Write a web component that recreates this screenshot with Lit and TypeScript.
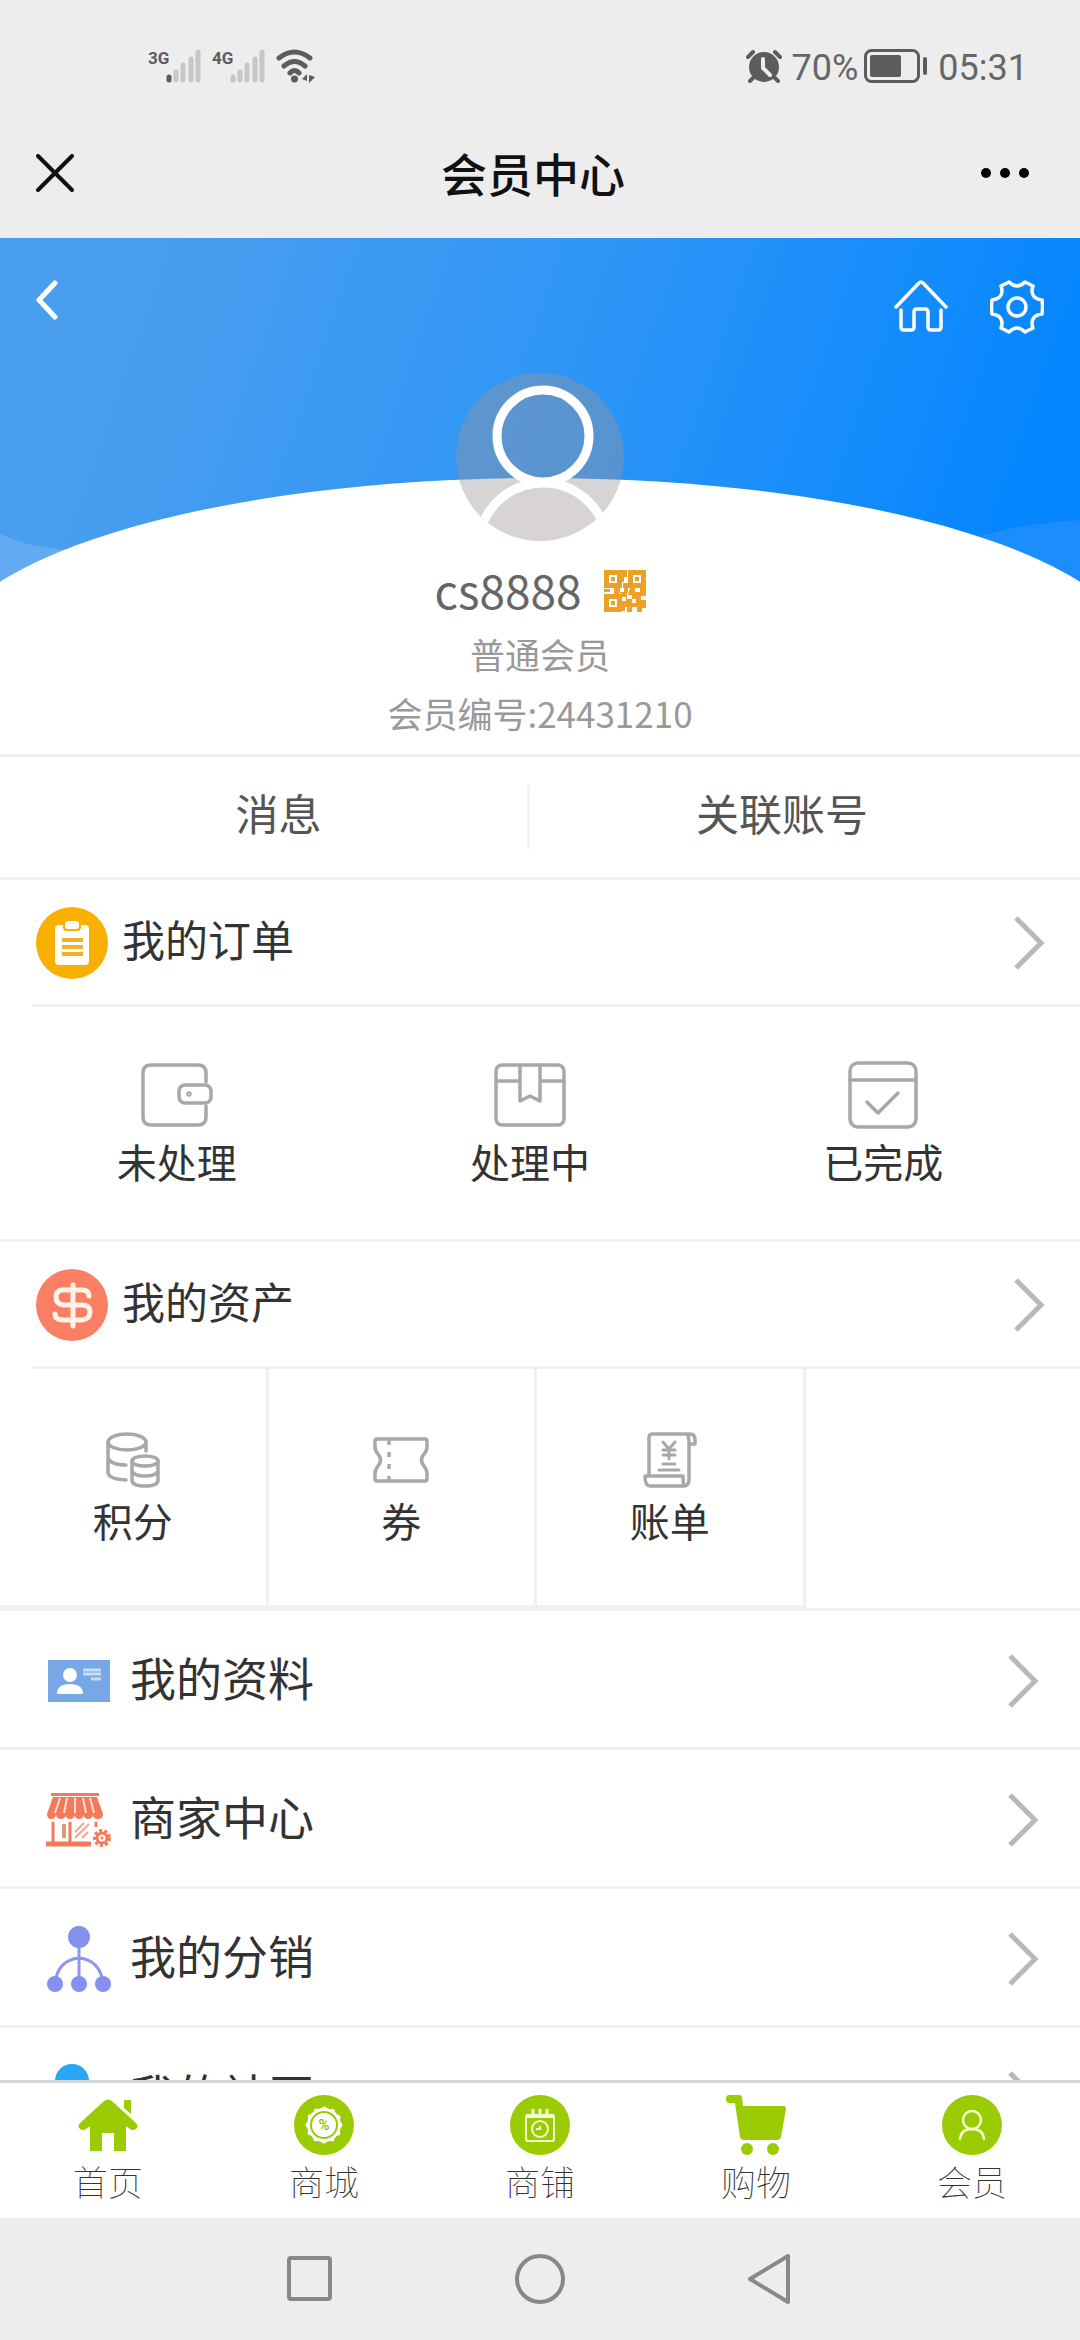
import { LitElement, html, css, svg, nothing } from "lit";
import type { TemplateResult } from "lit";
import { customElement, property } from "lit/decorators.js";

const art = (w: number, h: number, body: TemplateResult) =>
  html`<svg width=${w} height=${h} viewBox="0 0 ${w} ${h}" fill="none" aria-hidden="true">${body}</svg>`;

/* ---------- status bar ---------- */

const signal = (label: string, first: string) =>
  art(54, 36, svg`
    <text x="0" y="16" font-family="Roboto, sans-serif" font-size="17" font-weight="700" fill="#5c5c5c">${label}</text>
    <g stroke-width="5" stroke-linecap="round" stroke="#c6c6c6">
      <path d="M21 29v3" stroke=${first}/>
      <path d="M28 24v8M35 17v15M43 11v21M50 4v28"/>
    </g>`);

const wifi = art(40, 36, svg`
  <g stroke="#5c5c5c" stroke-width="5" stroke-linecap="round">
    <path d="M3 10Q18.500 -2 34 10M8 18Q18.500 9 29 18M14 25Q18.500 20 23 25"/>
  </g>
  <circle cx="18.500" cy="31" r="3.500" fill="#5c5c5c"/>
  <path d="M26 31l5-5v7zM33 27v8l6-6z" fill="#5c5c5c"/>`);

const alarm = art(36, 34, svg`
  <circle cx="18" cy="18" r="15" fill="#5c5c5c"/>
  <g stroke="#5c5c5c" stroke-width="4" stroke-linecap="round">
    <path d="M2 8l5-5M34 8l-5-5M7 29l-3 3M29 29l3 3"/>
  </g>
  <path d="M17 10v9l7 7" stroke="#ededed" stroke-width="4" stroke-linecap="round" stroke-linejoin="round"/>`);

const battery = art(64, 34, svg`
  <rect x="1.500" y="1.500" width="53" height="31" rx="6" stroke="#5c5c5c" stroke-width="3"/>
  <rect x="6" y="6" width="31" height="22" rx="2" fill="#5c5c5c"/>
  <path d="M61 10v14" stroke="#5c5c5c" stroke-width="4" stroke-linecap="round"/>`);

/* ---------- title bar ---------- */

const closeIcon = art(38, 38, svg`<path d="M2 2l34 34M36 2L2 36" stroke="#111" stroke-width="4" stroke-linecap="round"/>`);

const dotsIcon = art(50, 12, svg`
  <g fill="#000"><circle cx="6" cy="6" r="5"/><circle cx="25" cy="6" r="5"/><circle cx="44" cy="6" r="5"/></g>`);

/* ---------- profile ---------- */

const backIcon = art(24, 40, svg`<path d="M19 3L3 20l16 17" stroke="#fff" stroke-width="5" stroke-linecap="round" stroke-linejoin="round"/>`);

const homeOutline = art(54, 54, svg`
  <g stroke="#fff" stroke-width="3.500" stroke-linecap="round" stroke-linejoin="round">
    <path d="M2 27L25 3q2-2 4 0L52 27"/>
    <path d="M7 30v17q0 3 3 3h7q3 0 3-3V32q0-3 3-3h8q3 0 3 3v15q0 3 3 3h7q3 0 3-3V30"/>
  </g>`);

const gearIcon = art(54, 54, svg`
  <g stroke="#fff" stroke-width="3.500" stroke-linejoin="round">
    <path d="M19 2q4 4 8 4t8-4l8 4q-2 5 0 9t9 5q1 7 0 14-7 1-9 5t0 9l-8 4q-4-4-8-4t-8 4l-8-4q2-5 0-9t-9-5q-1-7 0-14 7-1 9-5t0-9z"/>
    <circle cx="27" cy="27" r="9"/>
  </g>`);

const avatarArt = art(168, 168, svg`
  <clipPath id="disc"><circle cx="84" cy="84" r="84"/></clipPath>
  <g clip-path="url(#disc)">
    <rect width="168" height="168" fill="#9e9397" fill-opacity=".4"/>
    <circle cx="87" cy="175" r="65" stroke="#fff" stroke-width="9"/>
    <circle cx="87" cy="63" r="46" stroke="#fff" stroke-width="9"/>
  </g>`);

const qrIcon = art(42, 42, svg`
  <g stroke="#eaa12a" stroke-width="5">
    <rect x="2.500" y="2.500" width="13" height="13"/><rect x="26.500" y="2.500" width="13" height="13"/><rect x="2.500" y="26.500" width="13" height="13"/>
  </g>
  <g fill="#f0a028">
    <rect x="7" y="7" width="4" height="4"/><rect x="31" y="7" width="4" height="4"/><rect x="7" y="31" width="4" height="4"/>
    <path d="M18 0h5v7h-3v5h-2zM19 13h5v5h-5zM0 19h6v3H0zM10 18h6v4h4v-4h4v5h-9v2h-5zM26 18h5v4h5v-4h6v8h-5v4h5v8h-4v4h-5v-5h-5v5h-5v-5h-2v4h-4V31h5v-4h-5v-4h6v6h5v4h4v-4h-4v-4h-4z"/>
  </g>`);

/* ---------- section badges ---------- */

const ordersBadge = art(72, 72, svg`
  <circle cx="36" cy="36" r="36" fill="#f9b000"/>
  <rect x="19" y="18" width="34" height="40" rx="4" fill="#fff"/>
  <path d="M27 14h18v6q0 4-4 4H31q-4 0-4-4z" fill="#f9b000"/>
  <rect x="29" y="14" width="14" height="8" rx="3" fill="#fff"/>
  <path d="M26 33h21M26 40h21M26 47h21" stroke="#f3b12a" stroke-width="4"/>`);

const assetsBadge = art(72, 72, svg`
  <circle cx="36" cy="36" r="36" fill="#fb7f62"/>
  <g stroke="#fff3ea" stroke-width="5" stroke-linecap="round">
    <path d="M53 27q0-6-7-6H27q-7 0-7 7t7 8h19q8 0 8 7t-8 8H27q-8 0-8-6M37 16v41"/>
  </g>`);

/* ---------- order and asset tiles ---------- */

const gray = (w: number, h: number, body: TemplateResult) =>
  art(w, h, svg`<g stroke="#a8a8a8" stroke-width="3.500" stroke-linecap="round" stroke-linejoin="round">${body}</g>`);

const walletIcon = gray(72, 68, svg`
  <path d="M65 21v-9q0-8-8-8H10q-8 0-8 8v44q0 8 8 8h47q8 0 8-8V45"/>
  <rect x="38" y="24" width="32" height="18" rx="6"/><circle cx="48" cy="33" r="1"/>`);

const parcelIcon = gray(72, 68, svg`
  <rect x="2" y="4" width="68" height="60" rx="6"/>
  <path d="M2 20h24M46 20h24M26 4v36l10-5 10 5V4"/>`);

const doneIcon = gray(70, 68, svg`
  <rect x="2" y="2" width="66" height="64" rx="8"/>
  <path d="M2 19h66M19 41l11 11 20-20"/>`);

const coinsIcon = gray(54, 56, svg`
  <ellipse cx="21" cy="10" rx="19" ry="8"/>
  <path d="M2 10v30q0 7 18 8M2 26q3 7 18 7M40 10v9"/>
  <ellipse cx="39" cy="29" rx="13" ry="5"/>
  <path d="M26 29v19q0 6 13 6t13-6V29M26 39q2 5 13 5t13-5"/>`);

const couponIcon = gray(56, 56, svg`
  <path d="M4 7h48q2 0 2 2v6q0 4-3 7-5 6 0 12 3 4 3 7v6q0 2-2 2H4q-2 0-2-2v-6q0-3 3-7 5-6 0-12-3-3-3-7V9q0-2 2-2z"/>
  <path d="M16 8v40" stroke-dasharray="5 7" stroke-linecap="butt"/>`);

const billIcon = gray(54, 56, svg`
  <path d="M6 44V5q0-3 4-3h37q5 0 5 6v4h-6M46 10q0-5-2-8M46 11v36q0 7-6 7H7q-5 0-5-10h38q0 8 1 10"/>
  <path stroke-width="3" d="M20 10l6 7 6-7M26 17v10M20 18h12M20 23h12M20 32h12M16 38h20"/>`);

/* ---------- list icons ---------- */

const cardIcon = art(66, 66, svg`
  <rect x="2" y="12" width="62" height="42" fill="#78a7e6"/>
  <g fill="#fff"><circle cx="24" cy="27" r="7"/><path d="M11 46q0-10 13-10t13 10z"/></g>
  <path d="M37 22h18M37 26h18M45 31h10" stroke="#c9defa" stroke-width="3"/>`);

const storeIcon = art(66, 56, svg`
  <path d="M5 1h48v3H5z" fill="#f4795a"/>
  <path d="M7 5h44l6 17q0 5-5 5t-5-4q-1 4-5 4t-4-4q-1 4-5 4t-4-4q-1 4-5 4t-4-4q-1 4-5 4t-5-4q-1 4-5 4t-4-5z" fill="#f4795a"/>
  <path d="M14 6l-5 15M21 6l-3 15M29 6v15M37 6l3 15M44 6l4 15" stroke="#ffe0d3" stroke-width="2"/>
  <path d="M7 30v20M24 30v20" stroke="#f4795a" stroke-width="3"/>
  <path d="M18 32v14" stroke="#dd9c7c" stroke-width="4"/>
  <path d="M29 40l9-9M29 46L43 32M36 46l6-6" stroke="#f6a58c" stroke-width="2"/>
  <path d="M50 30v5" stroke="#f4795a" stroke-width="3"/>
  <path d="M0 52h45" stroke="#f4795a" stroke-width="5"/>
  <circle cx="56" cy="46" r="7" stroke="#f4795a" stroke-width="4" stroke-dasharray="3 2"/>
  <circle cx="56" cy="46" r="5" stroke="#f4795a" stroke-width="3"/>
  <circle cx="56" cy="46" r="1.500" fill="#f4795a"/>`);

const treeIcon = art(66, 68, svg`
  <g stroke="#8c98f0" stroke-width="3"><path d="M33 12v46M9 58q3-23 24-25 21 2 24 25"/></g>
  <g fill="#8391ee"><circle cx="33" cy="12" r="11"/><circle cx="9" cy="59" r="8"/><circle cx="33" cy="59" r="8"/><circle cx="57" cy="59" r="8"/></g>`);

const peopleIcon = art(66, 68, svg`
  <g fill="#2aa5f8"><circle cx="26" cy="17" r="17"/><path d="M0 66q0-26 26-26t26 26z"/></g>`);

/* ---------- bottom tabs ---------- */

const homeTab = art(60, 60, svg`
  <g fill="#9bcb02">
    <path d="M25 7q5-5 10 0l23 21q3 3 0 6-3 2-6 0l-4-3v25H36V38H24v18H12V31l-4 3q-3 2-6 0-3-3 0-6z"/>
    <path d="M46 5h7v14l-7-6z"/>
  </g>`);

const mallTab = art(60, 60, svg`
  <circle cx="30" cy="30" r="30" fill="#9bcb02"/>
  <circle cx="30" cy="30" r="17" fill="#fff"/>
  <circle cx="30" cy="30" r="16" stroke="#fff" stroke-width="5" stroke-dasharray="0 8.370" stroke-linecap="round"/>
  <circle cx="30" cy="30" r="13" stroke="#9bcb02" stroke-width="2"/>
  <text x="30" y="35" text-anchor="middle" font-family="Roboto, sans-serif" font-size="15" font-weight="500" fill="#8abb00">%</text>`);

const shopTab = art(60, 60, svg`
  <circle cx="30" cy="30" r="30" fill="#9bcb02"/>
  <g stroke="#f4ffd0" stroke-width="2">
    <rect x="16" y="20" width="28" height="26" rx="2"/>
    <path d="M16 21h28" stroke-width="4"/>
    <path d="M23 15v6M30 15v6M37 15v6" stroke-width="3" stroke-linecap="round"/>
    <circle cx="30" cy="34" r="8"/><path d="M26 34h4v-3"/>
  </g>`);

const cartTab = art(60, 60, svg`
  <g fill="#9bcb02">
    <path d="M3 0h10q3 0 3 3l1 8h40q3 0 3 3l-5 28q-1 3-4 3H18q-3 0-4-3L9 8H3Q0 8 0 4t3-4z"/>
    <circle cx="21" cy="54" r="6"/><circle cx="47" cy="54" r="6"/>
  </g>`);

const memberTab = art(60, 60, svg`
  <circle cx="30" cy="30" r="30" fill="#9bcb02"/>
  <g stroke="#f4ffd0" stroke-width="2.500" stroke-linecap="round">
    <circle cx="30" cy="25" r="9"/><path d="M18 44q1-10 12-10t12 10"/>
  </g>`);

/* ---------- system navigation ---------- */

const recentKey = art(50, 50, svg`<rect x="4" y="4" width="41" height="41" rx="2" stroke="#888" stroke-width="4"/>`);
const homeKey = art(50, 50, svg`<circle cx="25" cy="25" r="23" stroke="#888" stroke-width="4"/>`);
const backKey = art(50, 50, svg`<path d="M43 2v46L5 25z" stroke="#888" stroke-width="4" stroke-linejoin="round"/>`);

const chevron = html`<svg class="chevron" width="32" height="56" viewBox="0 0 32 56" fill="none" aria-hidden="true">
  <path d="M3 3l25 25L3 53" stroke="#b9b9b9" stroke-width="5"/></svg>`;

const reset = css`
  * { box-sizing: border-box; }
  svg { display: block; flex: none; }
  button, a { font: inherit; color: inherit; background: none; border: 0; padding: 0; margin: 0; text-decoration: none; }
`;

@customElement("status-bar")
class StatusBar extends LitElement {
  static styles = [reset, css`
    :host { display: flex; align-items: center; justify-content: space-between; height: 112px; padding: 20px 52px 0 148px;
      font-family: Roboto, sans-serif; font-size: 36px; line-height: 40px; color: #666; }
    .group { display: flex; align-items: center; gap: 10px; }
    .power { display: flex; align-items: center; gap: 6px; }
    .text { padding-top: 4px; }
  `];
  render() {
    return html`
      <div class="group">${signal("3G", "#5c5c5c")}${signal("4G", "#c6c6c6")}${wifi}</div>
      <div class="group">${alarm}<span class="power"><span class="text">70%</span>${battery}</span><time class="text">05:31</time></div>`;
  }
}

@customElement("title-bar")
class TitleBar extends LitElement {
  static styles = [reset, css`
    :host { display: grid; grid-template-columns: 1fr auto 1fr; align-items: center; height: 126px; padding: 0 50px 4px 36px; }
    h1 { margin: 0; padding-bottom: 2px; font-size: 46px; line-height: 60px; font-weight: 500; color: #111; }
    .more { justify-self: end; }
    .close { justify-self: start; }
  `];
  render() {
    return html`
      <button class="close" aria-label="关闭">${closeIcon}</button>
      <h1>会员中心</h1>
      <button class="more" aria-label="更多">${dotsIcon}</button>`;
  }
}

@customElement("profile-header")
class ProfileHeader extends LitElement {
  static styles = [reset, css`
    :host { display: block; position: relative; padding: 42px 36px 19px; border-bottom: 3px solid #f0f0f0; }
    .backdrop { position: absolute; inset: 0 0 auto; width: 100%; height: 345px; }
    .content { position: relative; display: flex; flex-direction: column; align-items: center; }
    .tools { align-self: stretch; display: flex; align-items: flex-start; gap: 42px; margin-bottom: 39px; }
    .back { margin-right: auto; }
    .name { display: flex; align-items: center; gap: 22px; margin-top: 20px; font-size: 46px; line-height: 56px; color: #666; }
    .code { padding-top: 4px; }
    .meta { margin: 15px 0 0; font-size: 35px; line-height: 44px; color: #999; }
  `];
  render() {
    return html`
      <svg class="backdrop" viewBox="0 0 1080 345" preserveAspectRatio="none" aria-hidden="true">
        <defs><linearGradient id="sky" gradientUnits="userSpaceOnUse" x1="150" y1="0" x2="1010" y2="300">
          <stop offset="0" stop-color="#4a9eee"/><stop offset=".5" stop-color="#2d95f6"/><stop offset="1" stop-color="#0586ff"/>
        </linearGradient></defs>
        <rect width="1080" height="345" fill="url(#sky)"/>
        <path d="M0 296q30 14 70 16L0 345z" fill="#62abf1"/>
        <path d="M965 302q50-16 115-20v63z" fill="#1c8dfc"/>
        <ellipse cx="540" cy="424" rx="600" ry="184" fill="#fff"/>
      </svg>
      <div class="content">
        <div class="tools">
          <button class="back" aria-label="返回">${backIcon}</button>
          <button aria-label="首页">${homeOutline}</button>
          <button aria-label="设置">${gearIcon}</button>
        </div>
        ${avatarArt}
        <div class="name"><span>cs8888</span><button class="code" aria-label="二维码">${qrIcon}</button></div>
        <p class="meta">普通会员</p>
        <p class="meta">会员编号:24431210</p>
      </div>`;
  }
}

@customElement("menu-section")
class MenuSection extends LitElement {
  @property({ attribute: false }) badge: unknown = nothing;
  @property() heading = "";
  static styles = [reset, css`
    :host { display: block; border-bottom: 3px solid #f0f0f0; }
    .head { display: flex; align-items: center; height: 127px; margin-left: 32px; padding: 2px 35px 0 4px; gap: 14px;
      border-bottom: 3px solid #f0f0f0; font-size: 43px; line-height: 48px; color: #333; }
    .text { padding-bottom: 10px; }
    .chevron { margin-left: auto; }
  `];
  render() {
    return html`
      <a class="head" href="#">${this.badge}<span class="text">${this.heading}</span>${chevron}</a>
      <slot></slot>`;
  }
}

const orderTiles: [unknown, string][] = [[walletIcon, "未处理"], [parcelIcon, "处理中"], [doneIcon, "已完成"]];
const assetTiles: [unknown, string][] = [[coinsIcon, "积分"], [couponIcon, "券"], [billIcon, "账单"]];
const rows: [unknown, string][] = [
  [cardIcon, "我的资料"],
  [storeIcon, "商家中心"],
  [treeIcon, "我的分销"],
  [peopleIcon, "我的社区"],
];
const tabs: [unknown, string][] = [
  [homeTab, "首页"],
  [mallTab, "商城"],
  [shopTab, "商铺"],
  [cartTab, "购物"],
  [memberTab, "会员"],
];

@customElement("app-root")
class AppRoot extends LitElement {
  static styles = [reset, css`
    :host { display: flex; flex-direction: column; height: 100vh; overflow: hidden; background: #ededed;
      font-family: "Noto Sans CJK SC", "Noto Sans", sans-serif; color: #333; }
    main { flex: 1; min-height: 0; overflow: hidden; background: #fff; }

    .links { display: grid; grid-template-columns: 53fr 55fr; align-items: center;
      height: 123px; border-bottom: 3px solid #f0f0f0; font-size: 43px; line-height: 54px; color: #555; text-align: center; }
    .links a { padding-bottom: 10px; }
    .links a:first-child { padding-left: 30px; border-right: 3px solid #f3f3f3; }
    .links a:last-child { padding-right: 46px; }

    .tiles { display: grid; font-size: 40px; line-height: 48px; }
    .tile { display: flex; flex-direction: column; align-items: center; gap: 8px; }
    .orders { grid-template-columns: repeat(3, 1fr); padding: 54px 20px 54px 0; }
    .assets { grid-template-columns: repeat(4, 1fr); padding-right: 6px; }
    .assets .tile { padding: 63px 0 61px; border-right: 3px solid #f0f0f0; border-bottom: 3px solid #f0f0f0; }

    .row { display: flex; align-items: center; gap: 18px; height: 139px; padding: 4px 41px 0 46px;
      border-bottom: 3px solid #f0f0f0; font-size: 46px; line-height: 60px; }
    .row .text { padding-bottom: 10px; }
    .chevron { margin-left: auto; }

    .tabs { display: grid; grid-template-columns: repeat(5, 1fr); padding: 12px 0 15px; border-top: 3px solid #d8d8d8; background: #fff; }
    .tab { display: flex; flex-direction: column; align-items: center; gap: 4px; font-size: 35px; line-height: 44px; font-weight: 100; color: #333; }

    .keys { display: flex; justify-content: center; align-items: center; gap: 180px; height: 122px; }
  `];

  private tile([icon, label]: [unknown, string]) {
    return html`<a class="tile" href="#">${icon}<span>${label}</span></a>`;
  }

  render() {
    return html`
      <status-bar></status-bar>
      <title-bar></title-bar>
      <main>
        <profile-header></profile-header>
        <nav class="links"><a href="#">消息</a><a href="#">关联账号</a></nav>
        <menu-section heading="我的订单" .badge=${ordersBadge}>
          <div class="tiles orders">${orderTiles.map(this.tile)}</div>
        </menu-section>
        <menu-section heading="我的资产" .badge=${assetsBadge}>
          <div class="tiles assets">${assetTiles.map(this.tile)}</div>
        </menu-section>
        ${rows.map(([icon, label]) => html`<a class="row" href="#">${icon}<span class="text">${label}</span>${chevron}</a>`)}
      </main>
      <nav class="tabs">
        ${tabs.map(([icon, label]) => html`<a class="tab" href="#">${icon}<span>${label}</span></a>`)}
      </nav>
      <div class="keys">
        <button aria-label="最近任务">${recentKey}</button>
        <button aria-label="主屏幕">${homeKey}</button>
        <button aria-label="返回">${backKey}</button>
      </div>`;
  }
}
